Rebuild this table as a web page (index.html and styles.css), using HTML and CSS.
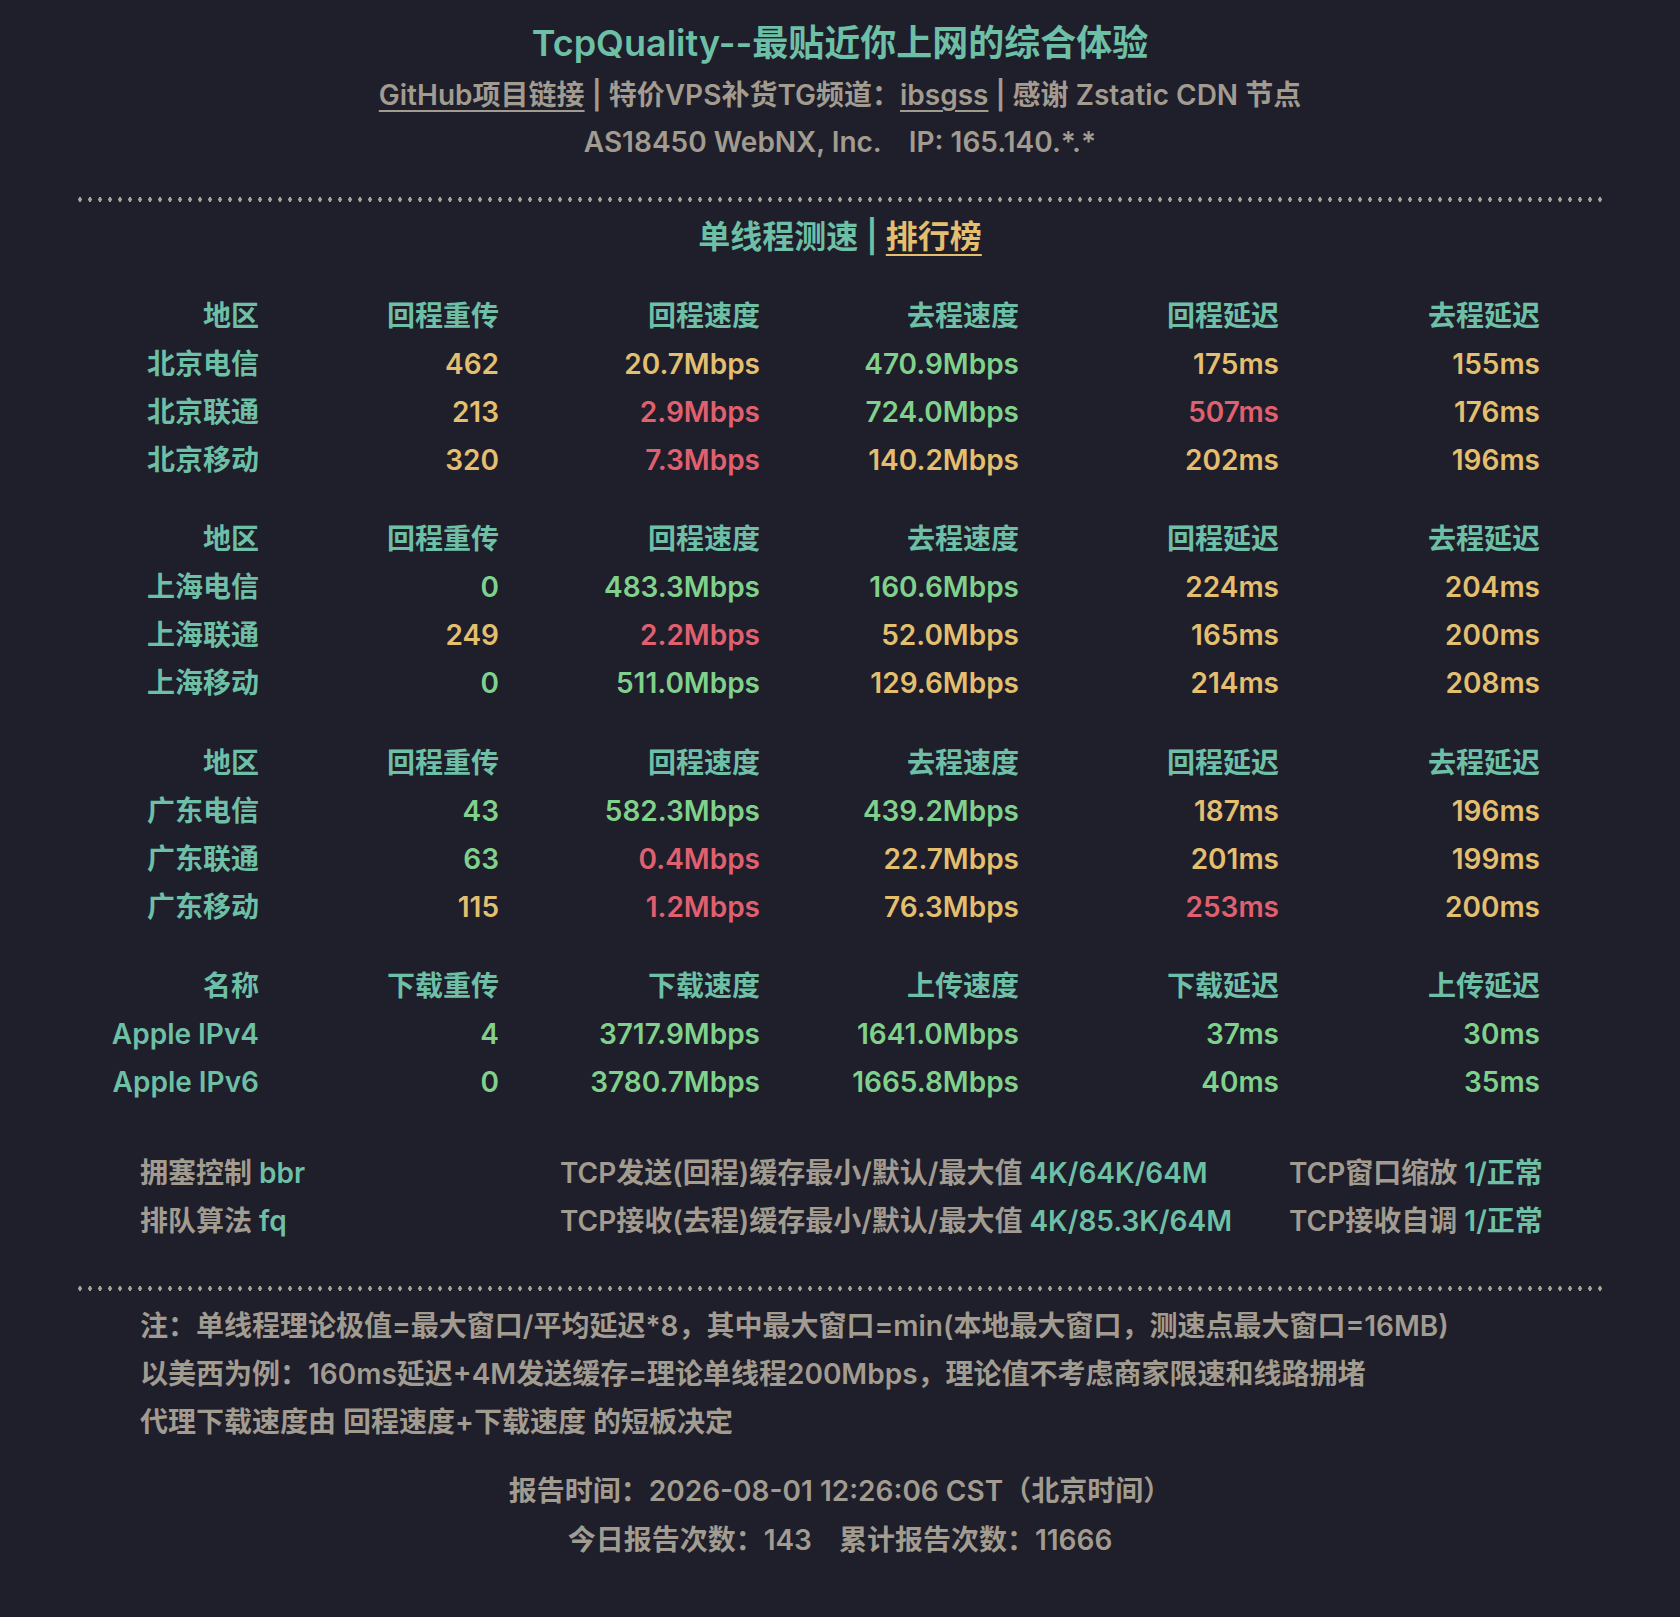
FILE: index.html
```html
<!DOCTYPE html>
<html lang="zh-CN">
<head>
<meta charset="utf-8">
<title>TcpQuality</title>
<link rel="stylesheet" href="styles.css">
</head>
<body>
<div class="page">
  <header class="head">
    <h1 class="title">TcpQuality--最贴近你上网的综合体验</h1>
    <p class="sub sub1"><a class="link" href="#">GitHub项目链接</a> <span class="bar">|</span> 特价VPS补货TG频道：<a class="link" href="#">ibsgss</a> <span class="bar">|</span> 感谢 Zstatic CDN 节点</p>
    <p class="sub sub2">AS18450 WebNX, Inc.<span class="gap"></span>IP: 165.140.*.*</p>
  </header>

  <div class="dots"></div>

  <h2 class="section">单线程测速 <span class="bar">|</span> <a class="rank" href="#">排行榜</a></h2>

  <div class="tbl">
    <div class="th">地区</div><div class="th">回程重传</div><div class="th">回程速度</div><div class="th">去程速度</div><div class="th">回程延迟</div><div class="th">去程延迟</div>
    <div class="lbl">北京电信</div><div class="y">462</div><div class="y">20.7Mbps</div><div class="g">470.9Mbps</div><div class="y">175ms</div><div class="y">155ms</div>
    <div class="lbl">北京联通</div><div class="y">213</div><div class="r">2.9Mbps</div><div class="g">724.0Mbps</div><div class="r">507ms</div><div class="y">176ms</div>
    <div class="lbl">北京移动</div><div class="y">320</div><div class="r">7.3Mbps</div><div class="y">140.2Mbps</div><div class="y">202ms</div><div class="y">196ms</div>
  </div>

  <div class="tbl">
    <div class="th">地区</div><div class="th">回程重传</div><div class="th">回程速度</div><div class="th">去程速度</div><div class="th">回程延迟</div><div class="th">去程延迟</div>
    <div class="lbl">上海电信</div><div class="g">0</div><div class="g">483.3Mbps</div><div class="g">160.6Mbps</div><div class="y">224ms</div><div class="y">204ms</div>
    <div class="lbl">上海联通</div><div class="y">249</div><div class="r">2.2Mbps</div><div class="y">52.0Mbps</div><div class="y">165ms</div><div class="y">200ms</div>
    <div class="lbl">上海移动</div><div class="g">0</div><div class="g">511.0Mbps</div><div class="y">129.6Mbps</div><div class="y">214ms</div><div class="y">208ms</div>
  </div>

  <div class="tbl tbl-wide">
    <div class="th">地区</div><div class="th">回程重传</div><div class="th">回程速度</div><div class="th">去程速度</div><div class="th">回程延迟</div><div class="th">去程延迟</div>
    <div class="lbl">广东电信</div><div class="g">43</div><div class="g">582.3Mbps</div><div class="g">439.2Mbps</div><div class="y">187ms</div><div class="y">196ms</div>
    <div class="lbl">广东联通</div><div class="g">63</div><div class="r">0.4Mbps</div><div class="y">22.7Mbps</div><div class="y">201ms</div><div class="y">199ms</div>
    <div class="lbl">广东移动</div><div class="y">115</div><div class="r">1.2Mbps</div><div class="y">76.3Mbps</div><div class="r">253ms</div><div class="y">200ms</div>
  </div>

  <div class="tbl">
    <div class="th">名称</div><div class="th">下载重传</div><div class="th">下载速度</div><div class="th">上传速度</div><div class="th">下载延迟</div><div class="th">上传延迟</div>
    <div class="lbl">Apple IPv4</div><div class="g">4</div><div class="g">3717.9Mbps</div><div class="g">1641.0Mbps</div><div class="g">37ms</div><div class="g">30ms</div>
    <div class="lbl">Apple IPv6</div><div class="g">0</div><div class="g">3780.7Mbps</div><div class="g">1665.8Mbps</div><div class="g">40ms</div><div class="g">35ms</div>
  </div>

  <div class="settings">
    <div>拥塞控制 <span class="v">bbr</span></div>
    <div>TCP发送(回程)缓存最小/默认/最大值 <span class="v">4K/64K/64M</span></div>
    <div>TCP窗口缩放 <span class="v">1/正常</span></div>
    <div>排队算法 <span class="v">fq</span></div>
    <div>TCP接收(去程)缓存最小/默认/最大值 <span class="v">4K/85.3K/64M</span></div>
    <div>TCP接收自调 <span class="v">1/正常</span></div>
  </div>

  <div class="dots dots2"></div>

  <div class="notes">
    <p>注：单线程理论极值=最大窗口/平均延迟*8，其中最大窗口=min(本地最大窗口，测速点最大窗口=16MB)</p>
    <p>以美西为例：160ms延迟+4M发送缓存=理论单线程200Mbps，理论值不考虑商家限速和线路拥堵</p>
    <p>代理下载速度由 回程速度+下载速度 的短板决定</p>
  </div>

  <footer class="foot">
    <p>报告时间：2026-08-01 12:26:06 CST（北京时间）</p>
    <p class="foot2">今日报告次数：143<span class="gap"></span>累计报告次数：11666</p>
  </footer>
</div>
</body>
</html>
```

FILE: styles.css
```css
html, body {
  margin: 0;
  padding: 0;
  background: #1f1e2b;
}

body {
  color: #a19b90;
  font-family: "Inter", "Noto Sans CJK SC", sans-serif;
  font-weight: 600;
  font-size: 28px;
  line-height: 48px;
}

.page {
  width: 1524px;
  margin: 0 auto;
  padding-top: 17px;
  padding-bottom: 40px;
}

.head {
  text-align: center;
}

.title {
  margin: 0;
  font-size: 36px;
  line-height: 52px;
  font-weight: 600;
  color: #6dbfa6;
}

.sub {
  margin: 0;
  text-align: center;
}

.sub1 {
  margin-top: 2px;
}

.sub2 {
  margin-top: -1px;
}

.link {
  color: inherit;
  text-decoration: underline;
  text-decoration-thickness: 2px;
  text-underline-offset: 5px;
}

.gap {
  display: inline-block;
  width: 27px;
}

.dots {
  margin: 31px -3px 0;
  height: 5px;
  background-image: radial-gradient(ellipse 1.8px 2.6px at center, #a8a397 85%, transparent 100%);
  background-size: 10px 5px;
  background-repeat: repeat-x;
  background-position: 0 0;
}

.section {
  margin: 11px 0 0;
  text-align: center;
  font-size: 32px;
  line-height: 48px;
  font-weight: 600;
  color: #6dbfa6;
}

.rank {
  color: #e3bf6f;
  text-decoration: underline;
  text-decoration-thickness: 2px;
  text-underline-offset: 6px;
}

.tbl {
  display: grid;
  grid-template-columns: 159px 240px 261px 259px 260px 261px;
  margin: 31px 62px 0 22px;
  text-align: right;
  white-space: nowrap;
}

.tbl-wide {
  margin-top: 32px;
}

.th, .lbl {
  color: #6dbfa6;
}

.y { color: #e3bf6f; }
.r { color: #e0606f; }
.g { color: #80d18b; }

.settings {
  display: grid;
  grid-template-columns: 420px 729px 251px;
  margin: 43px 62px 0;
  white-space: nowrap;
}

.v {
  color: #6dbfa6;
}

.dots2 {
  margin-top: 41px;
}

.notes {
  margin: 11px 62px 0;
}

.notes p {
  margin: 0;
}

.foot {
  margin-top: 21px;
  text-align: center;
}

.foot p {
  margin: 0;
}

.foot2 {
  line-height: 50px;
}
```
